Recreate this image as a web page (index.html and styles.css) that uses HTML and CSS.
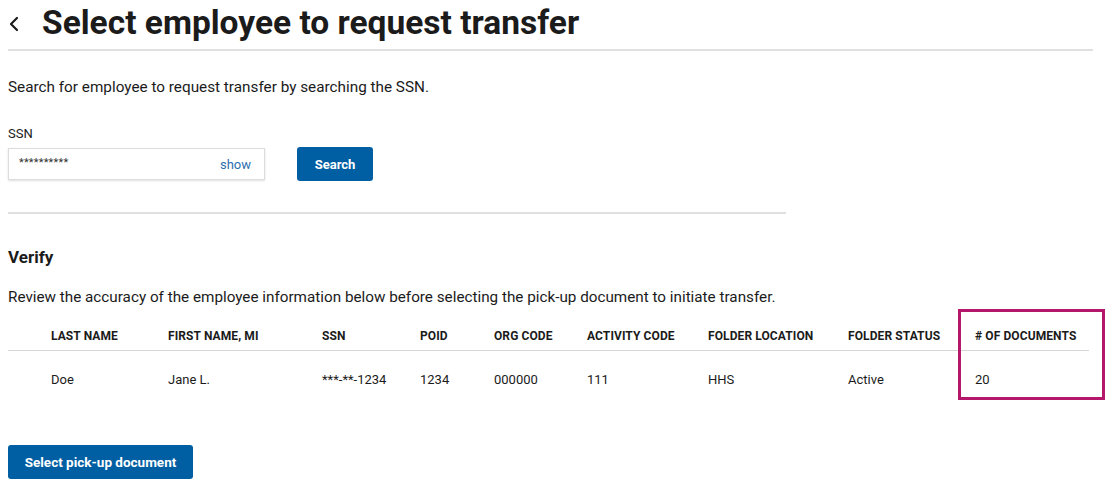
FILE: index.html
```html
<!DOCTYPE html>
<html lang="en">
<head>
<meta charset="utf-8">
<title>Select employee to request transfer</title>
<link rel="stylesheet" href="styles.css">
</head>
<body>
<header class="page-head">
  <a class="back" href="#" aria-label="Back">
    <svg width="12" height="16" viewBox="0 0 12 16"><path d="M9 2 L3 8 L9 14" fill="none" stroke="#1b1b1b" stroke-width="2.2" stroke-linecap="round" stroke-linejoin="round"/></svg>
  </a>
  <h1 class="title">Select employee to request transfer</h1>
</header>

<main class="content">
  <p class="intro">Search for employee to request transfer by searching the SSN.</p>

  <div class="search">
    <label class="label" for="ssn">SSN</label>
    <div class="search-row">
      <div class="field">
        <span class="mask">**********</span>
        <a class="show" href="#">show</a>
      </div>
      <button class="btn btn-search" type="button">Search</button>
    </div>
  </div>

  <hr class="divider">

  <h2 class="verify">Verify</h2>
  <p class="review">Review the accuracy of the employee information below before selecting the pick-up document to initiate transfer.</p>

  <div class="table-wrap">
    <div class="table">
      <div class="row head">
        <span></span>
        <span>LAST NAME</span>
        <span>FIRST NAME, MI</span>
        <span>SSN</span>
        <span>POID</span>
        <span>ORG CODE</span>
        <span>ACTIVITY CODE</span>
        <span>FOLDER LOCATION</span>
        <span>FOLDER STATUS</span>
        <span># OF DOCUMENTS</span>
      </div>
      <div class="row body">
        <span></span>
        <span>Doe</span>
        <span>Jane L.</span>
        <span>***-**-1234</span>
        <span>1234</span>
        <span>000000</span>
        <span>111</span>
        <span>HHS</span>
        <span>Active</span>
        <span>20</span>
      </div>
    </div>
    <div class="highlight"></div>
  </div>

  <button class="btn btn-select" type="button">Select pick-up document</button>
</main>
</body>
</html>
```

FILE: styles.css
```css
* { box-sizing: border-box; }

body {
  margin: 0;
  width: 1105px;
  height: 486px;
  overflow: hidden;
  background: #fff;
  color: #1b1b1b;
  font-family: Roboto, "Liberation Sans", sans-serif;
}

.page-head {
  display: flex;
  align-items: center;
  margin: 0 12px 0 8px;
  height: 51px;
  padding-bottom: 3px;
  border-bottom: 2px solid #e0e0e0;
}

.back {
  display: flex;
  width: 34px;
  padding-top: 2px;
}

.title {
  margin: 0;
  font-size: 33.5px;
  font-weight: 700;
  letter-spacing: 0;
  line-height: 40px;
}

.content {
  padding: 0 8px;
}

.intro {
  margin: 26px 0 0;
  font-size: 15.3px;
  line-height: 20px;
  color: #1b1b1b;
}

.search {
  margin-top: 29px;
}

.label {
  display: block;
  font-size: 13px;
  line-height: 16px;
}

.search-row {
  display: flex;
  align-items: center;
  gap: 32px;
  margin-top: 5px;
}

.field {
  width: 257px;
  height: 32px;
  border: 1px solid #dcdcdc;
  box-shadow: 0 1px 2px rgba(0,0,0,0.12);
  display: flex;
  align-items: center;
  justify-content: space-between;
  padding: 0 13px 0 10px;
}

.mask {
  font-size: 11px;
  letter-spacing: 0.2px;
  color: #333;
  margin-top: -4px;
}

.show {
  color: #2e6fb0;
  text-decoration: none;
  font-size: 13px;
}

.btn {
  border: 0;
  border-radius: 3px;
  background: #005ea2;
  color: #fff;
  font-family: inherit;
  font-weight: 700;
  font-size: 13px;
  cursor: pointer;
}

.btn-search {
  width: 76px;
  height: 34px;
}

.divider {
  width: 778px;
  margin: 31px 0 0;
  border: 0;
  border-top: 2px solid #e0e0e0;
}

.verify {
  margin: 33px 0 0;
  font-size: 17px;
  font-weight: 700;
  line-height: 20px;
}

.review {
  margin: 20px 0 0;
  font-size: 15.25px;
  line-height: 20px;
}

.table-wrap {
  position: relative;
  margin-top: 8px;
  width: 1081px;
}

.row {
  display: grid;
  grid-template-columns: 43px 117px 154px 98px 74px 93px 121px 140px 127px 114px;
  align-items: center;
}

.row.head {
  height: 36px;
  padding-top: 6px;
  border-bottom: 1px solid #d6d6d6;
  font-size: 12px;
  font-weight: 700;
  letter-spacing: 0.1px;
}

.row.body {
  height: 56px;
  font-size: 13px;
  padding-top: 0;
}

.highlight {
  position: absolute;
  left: 950px;
  top: -6px;
  width: 147px;
  height: 91px;
  border: 3px solid #b5176b;
}

.btn-select {
  margin-top: 38px;
  width: 185px;
  height: 34px;
  font-size: 13.5px;
}
```
